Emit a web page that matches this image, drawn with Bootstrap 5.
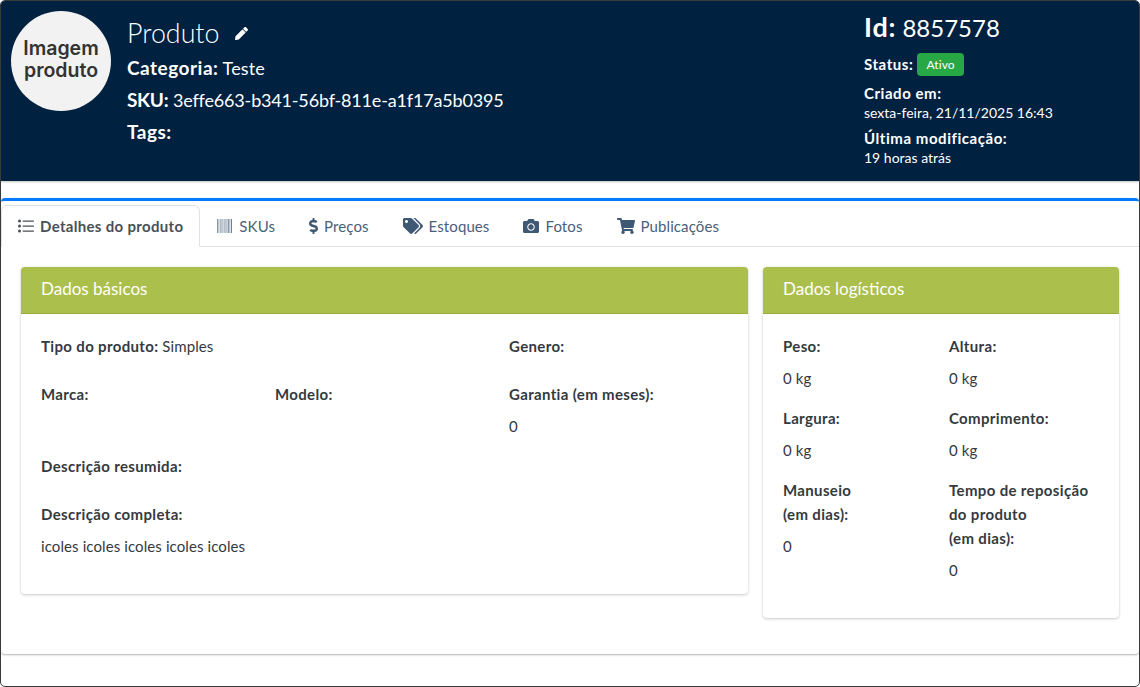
<!doctype html>
<html lang="pt-BR"><head><meta charset="utf-8">
<link href="https://cdn.jsdelivr.net/npm/bootstrap@5.3.0/dist/css/bootstrap.min.css" rel="stylesheet">
<style>
html,body{height:100%;background:#fff}
body{font-family:"Lato","Liberation Sans",sans-serif;font-size:15px;line-height:24px;color:#343a40;overflow:hidden;letter-spacing:.1px}
b{font-weight:700;letter-spacing:.35px}
.frame{height:687px;border:1px solid #3a3a3a;border-radius:5px;overflow:hidden;background:#fff}
.head{height:180px;background:#00213f;color:#fff;box-shadow:0 1px 2px rgba(0,0,0,.25)}
.avatar{width:100px;height:100px;background:#f2f2f2;color:#333;font-family:"Inter",sans-serif;font-weight:600;font-size:19.5px;line-height:22px;margin:10px 0 0 10px;padding-bottom:4px;letter-spacing:0}
.info{margin-left:16px;padding-top:14px}
.title{font-size:26.8px;line-height:36px;font-weight:300;letter-spacing:0}
.hline{font-size:18px;line-height:24px;margin-top:8px}
.hline.first{margin-top:5px}
.hline b{font-size:19px;letter-spacing:.5px}
.hline b.skukey{letter-spacing:-.3px}
.skuval{letter-spacing:-.17px}
.side{width:275px;padding-top:8px;font-size:14px;line-height:19px;letter-spacing:0}
.side b{font-size:15px;letter-spacing:.55px}
.idline{font-size:24px;line-height:36px}
.idline b{font-size:27px;letter-spacing:.8px}
.st{background:#28a745;font-size:12px;font-weight:400;padding:4px 9.5px;border-radius:4px;line-height:15px;letter-spacing:.1px;position:relative;top:-1px}
.crit{margin-top:7px}
.outer{margin-top:17px;height:456px;border-top:3px solid #007bff;border-radius:4px;box-shadow:0 1px 2px rgba(0,0,0,.3)}
.tabs{padding-top:4px;height:46px;--bs-nav-tabs-border-color:#dee2e6}
.tabs .nav-link{height:42px;padding:9px 16px;color:#4a5f7a;display:flex;align-items:center;gap:6px;font-size:15px}
.tabs .nav-link.active{font-weight:700;color:#495057;letter-spacing:.32px;gap:6px}
.ic{fill:#3f5873;height:16px;width:auto;display:block}
.active .ic{fill:#495057}
.pane{padding:20px}
.pane .row{--bs-gutter-x:15px}
.box{border:0;border-radius:4px;box-shadow:0 0 1px rgba(0,0,0,.13),0 1px 3px rgba(0,0,0,.2)}
.box .card-header{height:47px;background:#abc04c;color:#fff;font-size:17px;line-height:24px;padding:10px 20px;border-bottom:1px solid #98ac3f;border-radius:4px 4px 0 0;letter-spacing:0}
.box .card-body{padding:20px 20px 28px}
.box .row{--bs-gutter-x:16px}
.box .row.three{--bs-gutter-x:15px}
.box p{margin:0 0 8px}
</style></head><body>
<div class="frame">
 <header class="head d-flex">
  <div class="avatar rounded-circle d-flex align-items-center justify-content-center text-center flex-shrink-0">Imagem<br>produto</div>
  <div class="info flex-grow-1">
   <div class="title d-flex align-items-center gap-3">Produto <svg width="13" height="13" viewBox="0 0 512 512" fill="#fff"><path d="M497.9 142.1l-46.1 46.1c-4.7 4.7-12.3 4.7-17 0l-111-111c-4.7-4.7-4.7-12.3 0-17l46.1-46.1c18.7-18.7 49.1-18.7 67.9 0l60.1 60.1c18.8 18.7 18.8 49.1 0 67.9zM284.2 99.8L21.6 362.4.4 483.9c-2.9 16.4 11.4 30.6 27.8 27.8l121.5-21.3 262.6-262.6c4.7-4.7 4.7-12.3 0-17l-111-111c-4.8-4.7-12.4-4.7-17.1 0z"/></svg></div>
   <div class="hline first"><b>Categoria:</b> Teste</div>
   <div class="hline"><b class="skukey">SKU:</b> <span class="skuval">3effe663-b341-56bf-811e-a1f17a5b0395</span></div>
   <div class="hline"><b>Tags:</b></div>
  </div>
  <div class="side flex-shrink-0">
   <div class="idline"><b>Id:</b> 8857578</div>
   <div class="mt-2"><b>Status:</b> <span class="badge st">Ativo</span></div>
   <div class="crit"><b>Criado em:</b><br>sexta-feira, 21/11/2025 16:43</div>
   <div class="crit"><b>Última modificação:</b><br>19 horas atrás</div>
  </div>
 </header>
 <section class="outer">
  <ul class="nav nav-tabs tabs">
   <li class="nav-item"><a class="nav-link active" href="#"><svg class="ic" viewBox="0 0 512 512"><path d="M48 48a48 48 0 1 0 0 96 48 48 0 0 0 0-96zm0 160a48 48 0 1 0 0 96 48 48 0 0 0 0-96zm0 160a48 48 0 1 0 0 96 48 48 0 0 0 0-96zM160 76h340a12 12 0 0 1 12 12v16a12 12 0 0 1-12 12H160a12 12 0 0 1-12-12V88a12 12 0 0 1 12-12zm0 160h340a12 12 0 0 1 12 12v16a12 12 0 0 1-12 12H160a12 12 0 0 1-12-12v-16a12 12 0 0 1 12-12zm0 160h340a12 12 0 0 1 12 12v16a12 12 0 0 1-12 12H160a12 12 0 0 1-12-12v-16a12 12 0 0 1 12-12z"/></svg>Detalhes do produto</a></li>
   <li class="nav-item"><a class="nav-link" href="#"><svg class="ic" viewBox="0 0 512 512"><path d="M0 32h26v448H0zm50 0h14v448H50zm38 0h26v448H88zm50 0h14v448h-14zm38 0h14v448h-14zm38 0h26v448h-26zm50 0h14v448h-14zm38 0h14v448h-14zm38 0h38v448h-38zm62 0h14v448h-14zm38 0h40v448h-40z" opacity=".75"/></svg>SKUs</a></li>
   <li class="nav-item"><a class="nav-link" href="#"><svg class="ic" viewBox="0 0 288 512"><path d="M209.2 233.4l-108-31.6C88.7 198.2 80 186.5 80 173.5c0-16.3 13.2-29.5 29.5-29.5h66.3c12.2 0 24.2 3.7 34.2 10.5 6.1 4.1 14.3 3.1 19.5-2l34.8-34c7.1-6.9 6.1-18.4-1.8-24.5C238 74.8 207.4 64.1 176 64V16c0-8.8-7.2-16-16-16h-32c-8.8 0-16 7.2-16 16v48h-2.5C45.8 64-5.4 118.7.5 183.6c4.2 46.1 39.4 83.6 83.8 96.6l102.5 30c12.5 3.7 21.2 15.3 21.2 28.3 0 16.3-13.2 29.5-29.5 29.5h-66.3C100 368 88 364.3 78 357.5c-6.1-4.1-14.3-3.1-19.5 2l-34.8 34c-7.1 6.9-6.1 18.4 1.8 24.5 24.5 19.2 55.1 29.9 86.5 30v48c0 8.8 7.2 16 16 16h32c8.8 0 16-7.2 16-16v-48.2c46.6-.9 90.3-28.6 105.7-72.7 21.5-61.6-14.6-124.8-72.5-141.7z"/></svg>Preços</a></li>
   <li class="nav-item"><a class="nav-link" href="#"><svg class="ic" viewBox="0 0 640 512"><path d="M497.941 225.941L286.059 14.059A48 48 0 0 0 252.118 0H48C21.49 0 0 21.49 0 48v204.118a48 48 0 0 0 14.059 33.941l211.882 211.882c18.744 18.745 49.136 18.746 67.882 0l204.118-204.118c18.745-18.745 18.745-49.137 0-67.882zM112 160c-26.51 0-48-21.49-48-48s21.49-48 48-48 48 21.49 48 48-21.49 48-48 48zm513.941 133.823L421.823 497.941c-18.745 18.745-49.137 18.745-67.882 0l-.36-.36L527.64 323.522c16.999-16.999 26.36-39.6 26.36-63.64s-9.362-46.641-26.36-63.64L331.397 0h48.721a48 48 0 0 1 33.941 14.059l211.882 211.882c18.745 18.745 18.745 49.137 0 67.882z"/></svg>Estoques</a></li>
   <li class="nav-item"><a class="nav-link" href="#"><svg class="ic" viewBox="0 0 512 512"><path d="M512 144v288c0 26.5-21.5 48-48 48H48c-26.5 0-48-21.5-48-48V144c0-26.5 21.5-48 48-48h88l12.3-32.9c7-18.7 24.9-31.1 44.9-31.1h125.5c20 0 37.9 12.4 44.9 31.1L376 96h88c26.5 0 48 21.5 48 48zM376 288c0-66.2-53.8-120-120-120s-120 53.8-120 120 53.8 120 120 120 120-53.8 120-120zm-32 0c0 48.5-39.5 88-88 88s-88-39.5-88-88 39.5-88 88-88 88 39.5 88 88z"/></svg>Fotos</a></li>
   <li class="nav-item"><a class="nav-link" href="#"><svg class="ic" viewBox="0 0 576 512"><path d="M528.12 301.319l47.273-208C578.806 78.301 567.391 64 551.99 64H159.208l-9.166-44.81C147.758 8.021 137.93 0 126.529 0H24C10.745 0 0 10.745 0 24v16c0 13.255 10.745 24 24 24h69.883l70.248 343.435C147.325 417.1 136 435.222 136 456c0 30.928 25.072 56 56 56s56-25.072 56-56c0-15.674-6.447-29.835-16.824-40h209.647C430.447 426.165 424 440.326 424 456c0 30.928 25.072 56 56 56s56-25.072 56-56c0-22.172-12.888-41.332-31.579-50.405l5.517-24.276c3.413-15.018-8.002-29.319-23.403-29.319H218.117l-6.545-32h293.145c11.206 0 20.92-7.754 23.403-18.681z"/></svg>Publicações</a></li>
  </ul>
  <div class="pane">
   <div class="row align-items-start">
    <div class="col-8">
     <div class="card box">
      <div class="card-header">Dados básicos</div>
      <div class="card-body">
       <div class="row three mb-3"><div class="col-8"><p><b>Tipo do produto:</b> Simples</p></div><div class="col-4"><p><b>Genero:</b></p></div></div>
       <div class="row three mb-2"><div class="col-4"><p><b>Marca:</b></p></div><div class="col-4"><p><b>Modelo:</b></p></div><div class="col-4"><p><b>Garantia (em meses):</b></p><p>0</p></div></div>
       <div class="mb-4"><p><b>Descrição resumida:</b></p></div>
       <div><p><b>Descrição completa:</b></p><p>icoles icoles icoles icoles icoles</p></div>
      </div>
     </div>
    </div>
    <div class="col-4">
     <div class="card box">
      <div class="card-header">Dados logísticos</div>
      <div class="card-body">
       <div class="row mb-2"><div class="col-6"><p><b>Peso:</b></p><p>0 kg</p></div><div class="col-6"><p><b>Altura:</b></p><p>0 kg</p></div></div>
       <div class="row mb-2"><div class="col-6"><p><b>Largura:</b></p><p>0 kg</p></div><div class="col-6"><p><b>Comprimento:</b></p><p>0 kg</p></div></div>
       <div class="row"><div class="col-6"><p><b>Manuseio<br>(em dias):</b></p><p>0</p></div><div class="col-6"><p><b>Tempo de reposição do produto<br>(em dias):</b></p><p>0</p></div></div>
      </div>
     </div>
    </div>
   </div>
  </div>
 </section>
</div>
</body></html>
